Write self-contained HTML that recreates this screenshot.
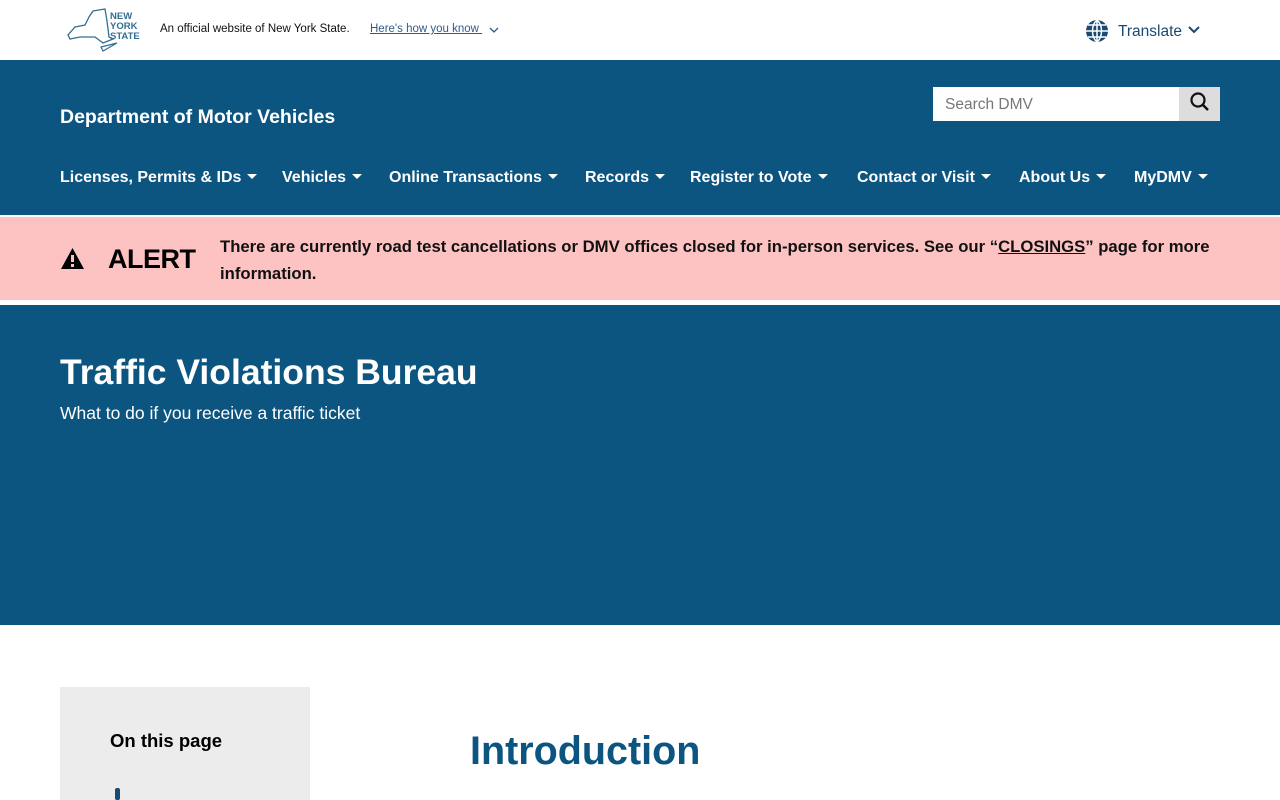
<!DOCTYPE html>
<html><head><style>
*{margin:0;padding:0;box-sizing:border-box}
body{width:1280px;height:800px;overflow:hidden;font-family:"Liberation Sans",Arial,sans-serif;background:#fff;position:relative}
.a{position:absolute;white-space:nowrap}
.nav{color:#fff;font-weight:bold;font-size:16px;top:169px}
.nav:after{content:"";display:inline-block;margin-left:6px;border-left:5px solid transparent;border-right:5px solid transparent;border-top:5px solid #fff;vertical-align:3px}
</style></head><body>
<svg class="a" style="left:65px;top:7px" width="80" height="46" viewBox="0 0 80 46">
<path d="M28 4 L40 2 L42 14 L44 30 L48 32 L38 36 L30 30 L15 30 L5 32 L3 28 L10 20 L20 18 L24 10 Z" fill="none" stroke="#356e94" stroke-width="1.3"/>
<path d="M36 40 L52 36 L38 44 Z" fill="none" stroke="#356e94" stroke-width="1.2"/>
<text x="45" y="12" font-size="9.5" font-weight="bold" fill="#356e94" font-family="Liberation Sans">NEW</text>
<text x="45" y="22" font-size="9.5" font-weight="bold" fill="#356e94" font-family="Liberation Sans">YORK</text>
<text x="45" y="32" font-size="9.5" font-weight="bold" fill="#356e94" font-family="Liberation Sans">STATE</text>
</svg>
<div class="a" style="left:160px;top:23px;font-size:11.5px;color:#111">An official website of New York State.</div>
<div class="a" style="left:370px;top:23px;font-size:11.5px;color:#2f5d8a;text-decoration:underline">Here's how you know&nbsp;</div>
<svg class="a" style="left:489px;top:27px" width="10" height="7"><path d="M1 1L5 5L9 1" stroke="#2f5d8a" stroke-width="1.3" fill="none"/></svg>
<svg class="a" style="left:1085px;top:19px" width="24" height="24" viewBox="0 0 24 24"><circle cx="12" cy="12" r="11" fill="#1a4a73"/><path d="M1 12H23M12 1V23M3 6H21M3 18H21M12 1C6 6 6 18 12 23M12 1C18 6 18 18 12 23" stroke="#fff" stroke-width="1.5" fill="none"/></svg>
<div class="a" style="left:1118px;top:23px;font-size:15.5px;color:#1a4a73">Translate</div>
<svg class="a" style="left:1188px;top:26px" width="12" height="9"><path d="M1 1L6 6L11 1" stroke="#1a4a73" stroke-width="2" fill="none"/></svg>
<div class="a" style="left:0;top:60px;width:1280px;height:155px;background:#0c5581"></div>
<div class="a" style="left:60px;top:106px;font-size:19.5px;font-weight:bold;color:#fff">Department of Motor Vehicles</div>
<div class="a" style="left:933px;top:87px;width:247px;height:34px;background:#fff;font-size:15.5px;color:#777;padding:9px 12px">Search DMV</div>
<div class="a" style="left:1179px;top:87px;width:41px;height:34px;background:#ddd"></div>
<svg class="a" style="left:1189px;top:91px" width="22" height="22"><circle cx="9" cy="9" r="6.5" stroke="#111" stroke-width="2.2" fill="none"/><path d="M14 14L19 19" stroke="#111" stroke-width="2.5"/></svg>
<div class="a nav" style="left:60px">Licenses, Permits &amp; IDs</div>
<div class="a nav" style="left:282px">Vehicles</div>
<div class="a nav" style="left:389px">Online Transactions</div>
<div class="a nav" style="left:585px">Records</div>
<div class="a nav" style="left:690px">Register to Vote</div>
<div class="a nav" style="left:857px">Contact or Visit</div>
<div class="a nav" style="left:1019px">About Us</div>
<div class="a nav" style="left:1134px">MyDMV</div>
<div class="a" style="left:0;top:217px;width:1280px;height:83px;background:#fdc3c3"></div>
<svg class="a" style="left:60px;top:247px" width="25" height="23"><path d="M12.5 1L24 22H1Z" fill="#000"/><rect x="11" y="8" width="3" height="7" fill="#fdc3c3"/><rect x="11" y="17" width="3" height="3" fill="#fdc3c3"/></svg>
<div class="a" style="left:108px;top:244px;font-size:27px;font-weight:900;color:#000;letter-spacing:-0.5px">ALERT</div>
<div class="a" style="left:220px;top:233px;width:1010px;white-space:normal;font-size:16.7px;font-weight:bold;line-height:27px;color:#111">There are currently road test cancellations or DMV offices closed for in-person services. See our “<u>CLOSINGS</u>” page for more information.</div>
<div class="a" style="left:0;top:305px;width:1280px;height:320px;background:#0c5581"></div>
<div class="a" style="left:60px;top:352px;font-size:35.5px;font-weight:900;color:#fff">Traffic Violations Bureau</div>
<div class="a" style="left:60px;top:403px;font-size:17.5px;color:#fff">What to do if you receive a traffic ticket</div>
<div class="a" style="left:60px;top:687px;width:250px;height:113px;background:#ececec"></div>
<div class="a" style="left:110px;top:730px;font-size:18.5px;font-weight:bold;color:#000">On this page</div>
<div class="a" style="left:115px;top:788px;width:5px;height:12px;background:#1a4a73;border-radius:2px"></div>
<div class="a" style="left:470px;top:729px;font-size:39.5px;font-weight:bold;color:#0c5581">Introduction</div>
</body></html>
